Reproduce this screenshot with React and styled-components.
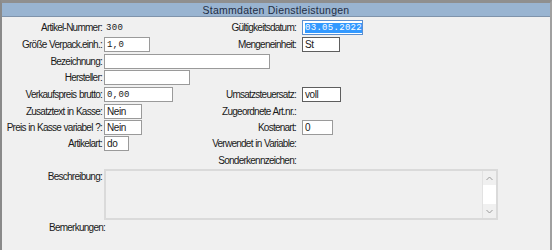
import React from 'react';
import styled, { createGlobalStyle } from 'styled-components';

const GlobalStyle = createGlobalStyle`
  html, body { margin: 0; padding: 0; background: #f0f0f0; }
  body { font-family: "Liberation Sans", Arial, sans-serif; }
`;

const Frame = styled.div`
  width: 552px;
  height: 250px;
  box-sizing: border-box;
  border-top: 3px solid #8f8f8f;
  border-left: 2px solid #8a8a8a;
  border-right: 2px solid #a0a0a0;
  background: #f0f0f0;
  overflow: hidden;
`;

const TitleBar = styled.div`
  height: 13px;
  background: #99b4d1;
  border-bottom: 1px solid #7f93ab;
  display: flex;
  align-items: center;
  justify-content: center;
  font-size: 10.5px;
  color: #1f2d44;
  letter-spacing: 0.25px;
`;

const Form = styled.div`
  display: grid;
  grid-template-columns: 100px 192px 2px 250px;
  grid-template-rows: 17px 17px 16px 17px 17px 16px 16px 16px 18px;
  column-gap: 2px;
  padding-top: 2px;
  font-size: 10px;
  letter-spacing: -0.75px;
  word-spacing: 0.5px;
  color: #1a1a1a;
`;

const Label = styled.div`
  display: flex;
  align-items: center;
  justify-content: flex-end;
  white-space: nowrap;
  grid-column: ${p => p.$col || 1};
  grid-row: ${p => p.$row};
`;

const RightLabel = styled(Label)`
  grid-column: 2 / 3;
`;

const Cell = styled.div`
  display: flex;
  align-items: center;
  grid-column: ${p => p.$col || 2};
  grid-row: ${p => p.$row};
`;

const Field = styled.div`
  box-sizing: border-box;
  width: ${p => p.$w}px;
  height: 15px;
  background: #fff;
  border: 1px solid ${p => (p.$focus ? '#5b8fd0' : p.$dark ? '#5e5e5e' : '#9a9a9a')};
  display: flex;
  align-items: center;
  padding-left: 2px;
  font-family: ${p => (p.$mono ? '"Liberation Mono", monospace' : 'inherit')};
  font-size: ${p => (p.$mono ? '9px' : 'inherit')};
  letter-spacing: ${p => (p.$mono ? '0.3px' : '-0.4px')};
  overflow: hidden;
  white-space: nowrap;
`;

const Plain = styled.span`
  font-family: "Liberation Mono", monospace;
  font-size: 9px;
  letter-spacing: 0.3px;
  padding-left: 2px;
`;

const Selected = styled.span`
  background: #3399ff;
  color: #fff;
  border-right: 1px solid #e08a3c;
  padding-right: 1px;
`;

const Lower = styled.div`
  display: grid;
  grid-template-columns: 100px 394px;
  column-gap: 2px;
  font-size: 10px;
  letter-spacing: -0.75px;
  color: #1a1a1a;
`;

const TopLabel = styled.div`
  text-align: right;
  padding-top: 2px;
  white-space: nowrap;
`;

const TextArea = styled.div`
  box-sizing: border-box;
  height: 51px;
  border: 2px solid #dadada;
  background: #f0f0f0;
  display: flex;
  justify-content: flex-end;
`;

const ScrollBar = styled.div`
  width: 13px;
  border-left: 1px solid #e2e2e2;
  background: #ffffff;
  display: flex;
  flex-direction: column;
  justify-content: space-between;
`;

const Arrow = styled.div`
  height: 14px;
  background: #f0f0f0;
  display: flex;
  align-items: center;
  justify-content: center;
`;

const Remarks = styled.div`
  padding: 2px 0 0 47px;
  font-size: 10px;
  letter-spacing: -0.75px;
  color: #1a1a1a;
`;

const Chevron = ({ up }) => (
  <svg width="7" height="5" viewBox="0 0 7 5">
    <path
      d={up ? 'M0.5 4 L3.5 1 L6.5 4' : 'M0.5 1 L3.5 4 L6.5 1'}
      fill="none"
      stroke="#9a9a9a"
      strokeWidth="1"
    />
  </svg>
);

export default function App() {
  return (
    <>
      <GlobalStyle />
      <Frame>
        <TitleBar>Stammdaten Dienstleistungen</TitleBar>
        <Form>
          <Label $row={1}>Artikel-Nummer:</Label>
          <Cell $row={1}><Plain>300</Plain></Cell>
          <RightLabel $row={1}>Gültigkeitsdatum:</RightLabel>
          <Cell $col={4} $row={1}>
            <Field $w={61} $mono $focus><Selected>03.05.2022</Selected></Field>
          </Cell>

          <Label $row={2}>Größe Verpack.einh.:</Label>
          <Cell $row={2}><Field $w={46} $mono>1,0</Field></Cell>
          <RightLabel $row={2}>Mengeneinheit:</RightLabel>
          <Cell $col={4} $row={2}><Field $w={38} $dark>St</Field></Cell>

          <Label $row={3}>Bezeichnung:</Label>
          <Cell $row={3}><Field $w={166} /></Cell>

          <Label $row={4}>Hersteller:</Label>
          <Cell $row={4}><Field $w={86} /></Cell>

          <Label $row={5}>Verkaufspreis brutto:</Label>
          <Cell $row={5}><Field $w={69} $mono>0,00</Field></Cell>
          <RightLabel $row={5}>Umsatzsteuersatz:</RightLabel>
          <Cell $col={4} $row={5}><Field $w={39} $dark>voll</Field></Cell>

          <Label $row={6}>Zusatztext in Kasse:</Label>
          <Cell $row={6}><Field $w={38}>Nein</Field></Cell>
          <RightLabel $row={6}>Zugeordnete Art.nr.:</RightLabel>

          <Label $row={7}>Preis in Kasse variabel ?:</Label>
          <Cell $row={7}><Field $w={38}>Nein</Field></Cell>
          <RightLabel $row={7}>Kostenart:</RightLabel>
          <Cell $col={4} $row={7}><Field $w={31}>0</Field></Cell>

          <Label $row={8}>Artikelart:</Label>
          <Cell $row={8}><Field $w={25}>do</Field></Cell>
          <RightLabel $row={8}>Verwendet in Variable:</RightLabel>

          <RightLabel $row={9}>Sonderkennzeichen:</RightLabel>
        </Form>
        <Lower>
          <TopLabel>Beschreibung:</TopLabel>
          <TextArea>
            <ScrollBar>
              <Arrow><Chevron up /></Arrow>
              <Arrow><Chevron /></Arrow>
            </ScrollBar>
          </TextArea>
        </Lower>
        <Remarks>Bemerkungen:</Remarks>
      </Frame>
    </>
  );
}
